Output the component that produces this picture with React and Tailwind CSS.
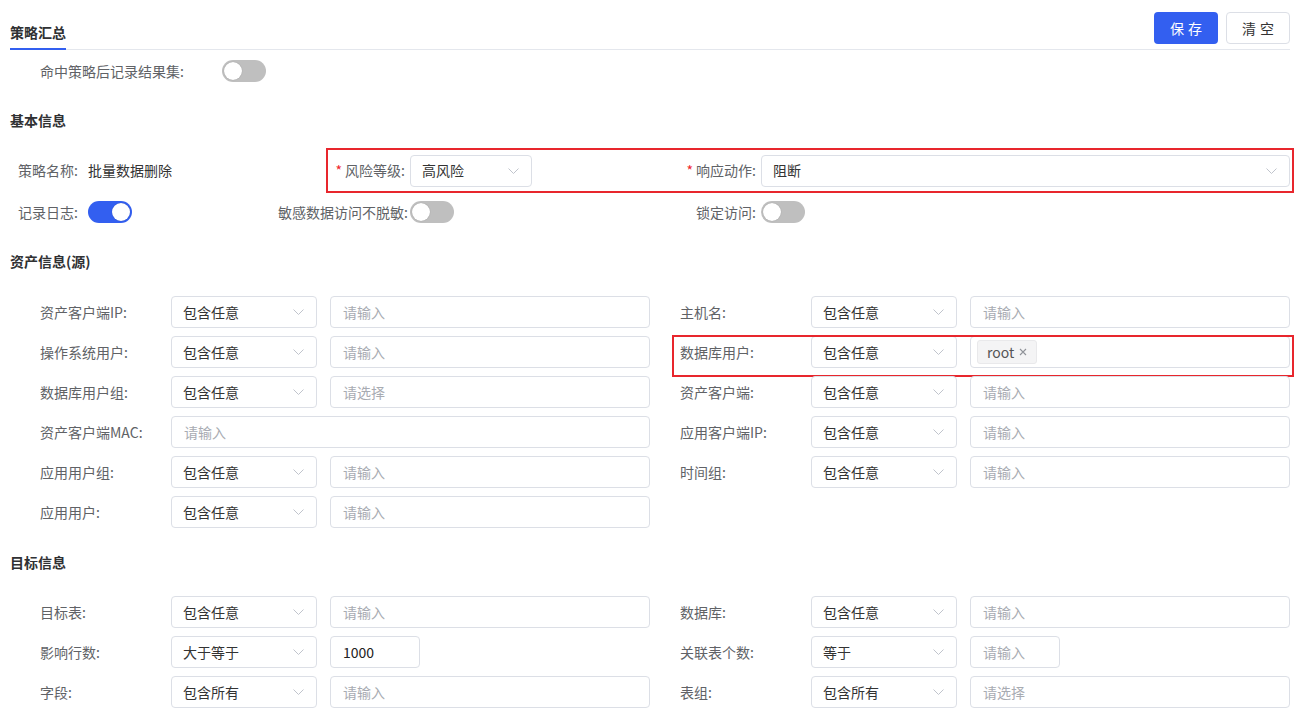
import React from 'react';

const BLUE = 'bg-[#335ff0]';

function Chevron() {
  return (
    <svg width="11" height="6" viewBox="0 0 11 6" className="shrink-0">
      <polyline points="0.5,0.5 5.5,5.5 10.5,0.5" fill="none" stroke="#c0c4cc" strokeWidth="1" />
    </svg>
  );
}

function Select({ value, className = 'w-[146px]' }) {
  return (
    <div className={`${className} h-[32px] shrink-0 border border-[#dcdfe6] rounded-[4px] bg-white flex items-center justify-between pl-[11px] pr-[12px] text-[14px] text-[#333]`}>
      <span className="whitespace-nowrap">{value}</span>
      <Chevron />
    </div>
  );
}

function Input({ placeholder, value, className = 'w-[320px]', children }) {
  return (
    <div className={`${className} h-[32px] shrink-0 border border-[#dcdfe6] rounded-[4px] bg-white flex items-center px-[12px] text-[14px]`}>
      {children ? children : value ? (
        <span className="text-[#222]">{value}</span>
      ) : (
        <span className="text-[#a8abb2]">{placeholder}</span>
      )}
    </div>
  );
}

function Toggle({ on }) {
  return (
    <div className={`w-[44px] h-[22px] rounded-full shrink-0 flex items-center px-[2px] ${on ? `${BLUE} justify-end` : 'bg-[#bfbfbf] justify-start'}`}>
      <div className="w-[18px] h-[18px] rounded-full bg-white shadow-[0_0_1px_rgba(0,0,0,0.3)]" />
    </div>
  );
}

function Heading({ children, h }) {
  return (
    <div className={`${h} flex items-center pl-[10px] text-[14px] font-bold text-[#303133]`}>{children}</div>
  );
}

function Field({ label, select, input, inputClass, highlight, children, className }) {
  return (
    <div className={`relative flex items-center ${className}`}>
      {highlight && (
        <div className="absolute left-[-8px] top-[-1px] w-[622px] h-[42px] border-2 border-[#e8262d] pointer-events-none" />
      )}
      <div className="w-[131px] shrink-0 text-[14px] text-[#606266] whitespace-nowrap">{label}</div>
      {select ? (
        <>
          <Select value={select} />
          <Input placeholder={input} className={`ml-[13px] ${inputClass || 'w-[320px]'}`}>{children}</Input>
        </>
      ) : (
        <Input placeholder={input} className="w-[479px]" />
      )}
    </div>
  );
}

function Row({ left, right }) {
  return (
    <div className="h-[40px] flex items-center pl-[40px]">
      {left ? <Field {...left} className="w-[640px] shrink-0" /> : <div className="w-[640px] shrink-0" />}
      {right && <Field {...right} className="shrink-0" />}
    </div>
  );
}

const assetRows = [
  [{ label: '资产客户端IP:', select: '包含任意', input: '请输入' }, { label: '主机名:', select: '包含任意', input: '请输入' }],
  [{ label: '操作系统用户:', select: '包含任意', input: '请输入' }, { label: '数据库用户:', select: '包含任意', highlight: true, tag: 'root' }],
  [{ label: '数据库用户组:', select: '包含任意', input: '请选择' }, { label: '资产客户端:', select: '包含任意', input: '请输入' }],
  [{ label: '资产客户端MAC:', input: '请输入' }, { label: '应用客户端IP:', select: '包含任意', input: '请输入' }],
  [{ label: '应用用户组:', select: '包含任意', input: '请输入' }, { label: '时间组:', select: '包含任意', input: '请输入' }],
  [{ label: '应用用户:', select: '包含任意', input: '请输入' }, null],
];

function RootTag() {
  return (
    <div className="-ml-[6px] h-[24px] px-[9px] flex items-center gap-[5px] bg-[#f4f4f5] border border-[#e9e9eb] rounded-[3px] text-[14px] text-[#555]">
      <span>root</span>
      <svg width="8" height="8" viewBox="0 0 8 8">
        <path d="M1 1L7 7M7 1L1 7" stroke="#909399" strokeWidth="1.1" />
      </svg>
    </div>
  );
}

export default function App() {
  return (
    <div className="min-h-screen bg-white text-[14px] text-[#333] font-['Noto_Sans_CJK_SC','Liberation_Sans',sans-serif]">
      {/* tab header */}
      <div className="flex h-[50px] items-end justify-between border-b border-[#e4e7ed] ml-[10px] mr-[12px]">
        <div className="-mb-px border-b-2 border-[#335ff0] pb-[5px] leading-[22px] font-bold text-[#303133]">策略汇总</div>
        <div className="flex gap-[8px] self-start mt-[12px]">
          <button className={`h-[32px] w-[64px] rounded-[4px] ${BLUE} text-white tracking-[4px] pl-[4px]`}>保存</button>
          <button className="h-[32px] w-[64px] rounded-[4px] border border-[#dcdfe6] bg-white text-[#333] tracking-[4px] pl-[4px]">清空</button>
        </div>
      </div>

      <div className="h-[42px] flex items-center pl-[40px]">
        <div className="w-[182px] text-[#606266] whitespace-nowrap">命中策略后记录结果集:</div>
        <Toggle />
      </div>

      <Heading h="h-[56px]">基本信息</Heading>

      <div className="h-[45px] flex items-center pl-[18px]">
        <div className="w-[308px] shrink-0 flex items-center whitespace-nowrap">
          <span className="w-[70px] text-[#606266]">策略名称:</span>
          <span className="text-[#333]">批量数据删除</span>
        </div>
        <div className="flex-1 h-[45px] mr-[8px] border-2 border-[#e8262d] flex items-center">
          <div className="w-[353px] shrink-0 flex items-center">
            <div className="w-[82px] flex justify-end pr-[5px] whitespace-nowrap text-[#606266]">
              <span className="text-[#f0262d] mr-[3px]">*</span>风险等级:
            </div>
            <Select value="高风险" className="w-[122px]" />
          </div>
          <div className="flex-1 flex items-center pr-[2px]">
            <div className="w-[80px] shrink-0 flex justify-end pr-[5px] whitespace-nowrap text-[#606266]">
              <span className="text-[#f0262d] mr-[3px]">*</span>响应动作:
            </div>
            <Select value="阻断" className="flex-1" />
          </div>
        </div>
      </div>

      <div className="h-[38px] flex items-center pl-[18px]">
        <div className="w-[310px] shrink-0 flex items-center">
          <span className="w-[70px] text-[#606266] whitespace-nowrap">记录日志:</span>
          <Toggle on />
        </div>
        <div className="w-[353px] shrink-0 flex items-center">
          <div className="w-[82px] flex justify-end pr-[2px] whitespace-nowrap text-[#606266]">敏感数据访问不脱敏:</div>
          <Toggle />
        </div>
        <div className="flex items-center">
          <div className="w-[80px] flex justify-end pr-[5px] whitespace-nowrap text-[#606266]">锁定访问:</div>
          <Toggle />
        </div>
      </div>

      <Heading h="h-[61px]">资产信息(源)</Heading>

      {assetRows.map(([l, r], i) => (
        <Row
          key={i}
          left={l}
          right={r && (r.tag ? { ...r, children: <RootTag /> } : r)}
        />
      ))}

      <Heading h="h-[60px]">目标信息</Heading>

      <Row
        left={{ label: '目标表:', select: '包含任意', input: '请输入' }}
        right={{ label: '数据库:', select: '包含任意', input: '请输入' }}
      />
      <div className="h-[40px] flex items-center pl-[40px]">
        <div className="w-[640px] shrink-0 flex items-center">
          <div className="w-[131px] shrink-0 text-[#606266]">影响行数:</div>
          <Select value="大于等于" />
          <Input value="1000" className="ml-[13px] w-[90px]" />
        </div>
        <div className="shrink-0 flex items-center">
          <div className="w-[131px] shrink-0 text-[#606266]">关联表个数:</div>
          <Select value="等于" />
          <Input placeholder="请输入" className="ml-[13px] w-[90px]" />
        </div>
      </div>
      <Row
        left={{ label: '字段:', select: '包含所有', input: '请输入' }}
        right={{ label: '表组:', select: '包含所有', input: '请选择' }}
      />
    </div>
  );
}
